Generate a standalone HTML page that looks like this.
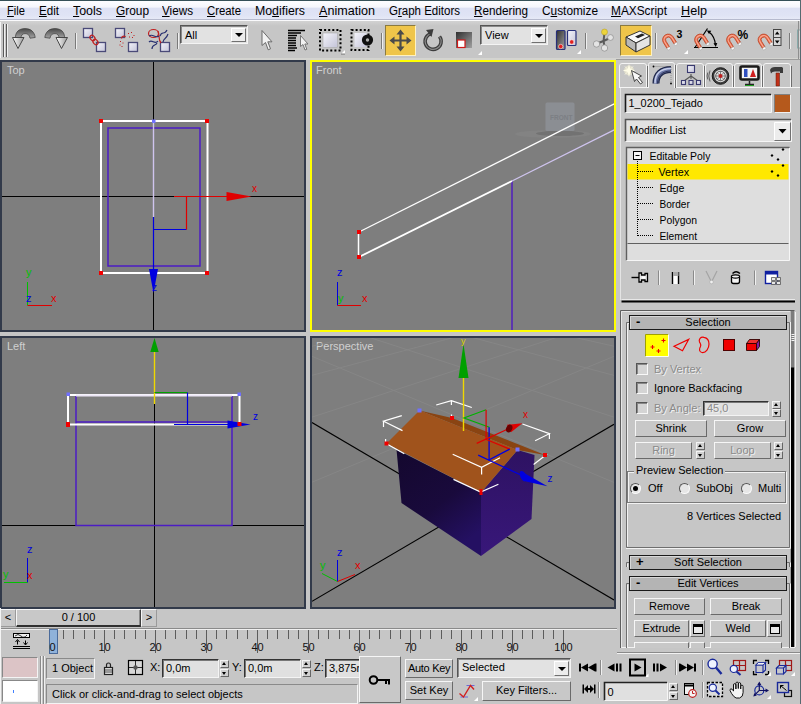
<!DOCTYPE html>
<html><head><meta charset="utf-8"><title>3ds Max</title>
<style>
*{box-sizing:border-box;margin:0;padding:0}
html,body{width:801px;height:704px;overflow:hidden;background:#c6c6c6}
body{font-family:"Liberation Sans",sans-serif;font-size:11px;color:#000;position:relative}
.abs{position:absolute}
#menubar{position:absolute;left:0;top:0;width:801px;height:20px;background:linear-gradient(#fdfdff 0,#f5f6fc 34%,#dde1f4 40%,#e0e4f5 80%,#e6e9f7 100%);border-top:1px solid #355058;border-bottom:1px solid #b6bace}
#menubar span{position:absolute;top:3px;font-size:12px;line-height:15px;white-space:nowrap;color:#000;transform-origin:0 0}
#menubar u{text-decoration:underline}
#tbhl{position:absolute;left:0;top:20px;width:801px;height:1px;background:#fafafc}
#toolbar{position:absolute;left:0;top:21px;width:801px;height:39px;background:linear-gradient(#d2d2d2 0,#c6c6c6 5px)}
.sep{position:absolute;width:2px;border-left:1px solid #7a7a7a;border-right:1px solid #efefef}
.combo{position:absolute;background:#e2e2e2;border:1px solid;border-color:#555 #f4f4f4 #f4f4f4 #555;box-shadow:inset 1px 1px 0 #8a8a8a}
.combo .t{position:absolute;left:4px;top:3px;font-size:11px;line-height:13px}
.combo .b{position:absolute;right:1px;top:2px;bottom:1px;width:15px;background:#ececec;border:1px solid;border-color:#fff #707070 #707070 #fff}
.combo .b:after{content:"";position:absolute;left:3px;top:50%;margin-top:-2px;border:4px solid transparent;border-top:4px solid #000;border-bottom:0}
.btn{position:absolute;background:#c8c8c8;border:1px solid;border-color:#f6f6f6 #6a6a6a #6a6a6a #f6f6f6;text-align:center;font-size:11px;line-height:14px;white-space:nowrap;overflow:hidden}
.btn.dis{color:#8a8a8a;text-shadow:1px 1px 0 #f0f0f0}
.field{position:absolute;background:#e0e0e0;border:1px solid;border-color:#333 #f4f4f4 #f4f4f4 #333;box-shadow:inset 1px 1px 0 #777;font-size:11px;line-height:14px;padding-left:3px;white-space:nowrap;overflow:hidden}
.spin{position:absolute;width:9px}
.spin i{position:absolute;left:0;width:9px;height:8px;background:#d0d0d0;border:1px solid;border-color:#f4f4f4 #666 #666 #f4f4f4}
.spin i:after{content:"";position:absolute;left:1px;top:1px;border:2.5px solid transparent}
.spin i.u{top:0}.spin i.u:after{border-bottom:3px solid #000;border-top:0}
.spin i.d{bottom:0}.spin i.d:after{border-top:3px solid #000;border-bottom:0;top:2px}
.lbl{position:absolute;font-size:11px;line-height:13px;white-space:nowrap}
.dis{color:#8a8a8a;text-shadow:1px 1px 0 #f0f0f0}
.chk{position:absolute;width:12px;height:12px;background:#d4d4d4;border:1px solid;border-color:#555 #f8f8f8 #f8f8f8 #555;box-shadow:inset 1px 1px 0 #888}
.roll{position:absolute;height:15px;background:#b4b4b4;border:1px solid #1a1a1a;box-shadow:inset 1px 1px 0 #d8d8d8;font-size:11px;line-height:13px;text-align:center}
.roll b{position:absolute;left:6px;top:-1px;font-weight:bold;font-size:13px}
.radio{position:absolute;width:11px;height:11px;border-radius:50%;background:#e6e6e6;border:1px solid;border-color:#555 #fafafa #fafafa #555}
.radio.on:after{content:"";position:absolute;left:2px;top:2px;width:5px;height:5px;border-radius:50%;background:#000}
</style></head><body>
<div id="menubar"><span style="left:7px;transform:scaleX(0.930)"><u>F</u>ile</span><span style="left:39px;transform:scaleX(0.966)"><u>E</u>dit</span><span style="left:73px;transform:scaleX(1.035)"><u>T</u>ools</span><span style="left:116px;transform:scaleX(0.989)"><u>G</u>roup</span><span style="left:162px;transform:scaleX(0.974)"><u>V</u>iews</span><span style="left:207px;transform:scaleX(0.944)"><u>C</u>reate</span><span style="left:255px;transform:scaleX(1.027)">Mo<u>d</u>ifiers</span><span style="left:319px;transform:scaleX(1.049)"><u>A</u>nimation</span><span style="left:389px;transform:scaleX(0.959)">G<u>r</u>aph Editors</span><span style="left:474px;transform:scaleX(0.975)"><u>R</u>endering</span><span style="left:542px;transform:scaleX(0.988)">C<u>u</u>stomize</span><span style="left:611px;transform:scaleX(0.988)"><u>M</u>AXScript</span><span style="left:681px;transform:scaleX(1.053)"><u>H</u>elp</span></div>
<!--MENUBAR_END-->
<!--TOOLBAR_START-->
<div id="tbhl"></div>
<div id="toolbar"></div>
<div class="abs" style="left:0;top:22px;width:1px;height:37px;background:#f4f4f4"></div>
<div class="abs" style="left:0;top:58px;width:801px;height:2px;background:#d4d4d0"></div>
<div class="abs" style="left:3px;top:24px;width:1px;height:33px;background:#5a5a5a"></div>
<div class="abs" style="left:4px;top:24px;width:1px;height:33px;background:#f0f0f0"></div>
<div class="abs" style="left:6px;top:24px;width:1px;height:33px;background:#5a5a5a"></div>
<div class="abs" style="left:7px;top:24px;width:1px;height:33px;background:#f0f0f0"></div>
<div class="sep" style="left:75px;top:33px;height:16px"></div>
<div class="sep" style="left:177px;top:33px;height:16px"></div>
<div class="sep" style="left:381px;top:33px;height:16px"></div>
<div class="sep" style="left:585px;top:33px;height:16px"></div>
<div class="sep" style="left:655px;top:33px;height:16px"></div>
<div class="sep" style="left:789px;top:33px;height:16px"></div>
<div class="abs" style="left:385px;top:25px;width:31px;height:31px;background:#efc54a;border:1px solid;border-color:#8a7a40 #fff2c0 #fff2c0 #8a7a40"></div>
<div class="abs" style="left:620px;top:25px;width:32px;height:31px;background:#efc54a;border:1px solid;border-color:#8a7a40 #fff2c0 #fff2c0 #8a7a40"></div>
<div class="combo" style="left:180px;top:25px;width:68px;height:19px"><span class="t">All</span><span class="b"></span></div>
<div class="combo" style="left:480px;top:25px;width:68px;height:20px"><span class="t">View</span><span class="b"></span></div>
<svg class="abs" style="left:0;top:22px" width="801" height="38" viewBox="0 22 801 38">
<defs>
<linearGradient id="gm" x1="0" y1="0" x2="1" y2="1"><stop offset="0" stop-color="#3a3a3a"/><stop offset="0.6" stop-color="#8a8a8a"/><stop offset="1" stop-color="#f2f2f2"/></linearGradient>
<linearGradient id="gm2" x1="0" y1="0" x2="0" y2="1"><stop offset="0" stop-color="#4a4a4a"/><stop offset="1" stop-color="#a8a8a8"/></linearGradient><linearGradient id="gh" x1="0" y1="0" x2="1" y2="0"><stop offset="0" stop-color="#ffffff"/><stop offset="1" stop-color="#9a9a9a"/></linearGradient><linearGradient id="gbox" x1="0" y1="0" x2="1" y2="1"><stop offset="0" stop-color="#f4f4fa"/><stop offset="1" stop-color="#c4c4d8"/></linearGradient>
<linearGradient id="gdark" x1="0" y1="0" x2="1" y2="1"><stop offset="0" stop-color="#303030"/><stop offset="1" stop-color="#a0a0a0"/></linearGradient>
<linearGradient id="gmag" x1="0" y1="0" x2="1" y2="1"><stop offset="0" stop-color="#f08060"/><stop offset="1" stop-color="#c83018"/></linearGradient>
</defs>
<!-- undo -->
<path d="M15.500 38.500 C15 32 19 28.600 25 28.600 C31 28.600 34.500 32 35.200 37.500 L30 38.200 C29.500 35 28 33.600 25 33.600 C22 33.600 21 35.500 21 38.500 Z" fill="url(#gm2)" stroke="#3a3a3a" stroke-width="0.700"/>
<path d="M12.500 37.500 L24 37.500 L18 48.500 Z" fill="url(#gh)" stroke="#3a3a3a" stroke-width="0.900"/>
<!-- redo -->
<path d="M64.500 38.500 C65 32 61 28.600 55 28.600 C49 28.600 45.500 32 44.800 37.500 L50 38.200 C50.500 35 52 33.600 55 33.600 C58 33.600 59 35.500 59 38.500 Z" fill="url(#gm2)" stroke="#3a3a3a" stroke-width="0.700"/>
<path d="M56 37.500 L67.500 37.500 L61.500 48.500 Z" fill="url(#gh)" stroke="#3a3a3a" stroke-width="0.900"/>
<!-- link -->
<g stroke="#4a4a78" stroke-width="1.3">
<rect x="83.5" y="28.5" width="9" height="9" fill="url(#gbox)"/><rect x="96.5" y="42.5" width="9" height="9" fill="url(#gbox)"/>
<rect x="115.5" y="28.5" width="9" height="9" fill="url(#gbox)"/><rect x="128.5" y="42.5" width="9" height="9" fill="url(#gbox)"/>
<rect x="160.5" y="42.5" width="9" height="9" fill="url(#gbox)"/>
</g>
<g fill="none" stroke="#c02020" stroke-width="1.2">
<ellipse cx="92.5" cy="38" rx="2.2" ry="3" transform="rotate(-40 92.5 38)"/><ellipse cx="95.5" cy="42" rx="2.2" ry="3" transform="rotate(-40 95.5 42)"/>
<path d="M121.5 38.5 a2.3 2.3 0 0 1 4 -1.5"/>
<path d="M128 33.5h1M131 32.5h1M133.500 35.500h1M129 37h1M132 37.500h1M120 41.500h1M122.500 43h1M119.500 45h1M121.500 46.500h1" stroke-width="1"/>
<ellipse cx="153.5" cy="33.500" rx="5" ry="4"/>
<path d="M158 31 C160 36 158 40 161 43"/>
</g>
<g fill="none" stroke="#283070" stroke-width="1.2">
<path d="M149 36 C153 33 155 39 159 36"/><path d="M149 42 C152 39 155 45 158 41"/><path d="M152 49 C152 44 156 46 157 43"/>
<path d="M160 36 C162 30 164 36 167 30"/><path d="M163 42 C164 37 166 40 168 34"/>
</g>
<!-- select cursor -->
<path d="M262 30.500 L262 45.500 L265.500 42.500 L268.200 49.800 L270.500 48.800 L267.800 41.800 L272 41.800 Z" fill="#f2f2f2" stroke="#6a6a6a" stroke-width="1"/>
<!-- select by name -->
<path d="M288 30.500h17M288 33h13M288 35.500h9M288 38h8M288 40.500h8M288 43h8M288 45.500h8M288 48h9M288 50.500h7" stroke="#000" stroke-width="1.3"/>
<path d="M300.500 35.500 L300.500 46.500 L303 44.500 L305 50 L306.800 49.300 L304.800 44 L308 44 Z" fill="#f2f2f2" stroke="#6a6a6a" stroke-width="0.9"/>
<!-- rect region -->
<rect x="320" y="30" width="20.500" height="20.500" fill="none" stroke="#000" stroke-width="2" stroke-dasharray="2 2.100"/>
<rect x="323" y="33" width="14.500" height="14.500" fill="url(#gbox)" stroke="#aaa" stroke-width="0.6"/>
<path d="M345 50 L345 54 L341 54 Z" fill="#fff"/><path d="M345 54 l-4 0" stroke="#333" stroke-width="0.6"/>
<!-- window crossing -->
<rect x="351.500" y="30" width="17" height="20" fill="none" stroke="#000" stroke-width="2" stroke-dasharray="2 2.100"/>
<rect x="354.500" y="33" width="12" height="14" fill="url(#gbox)"/>
<circle cx="367.500" cy="40" r="5.600" fill="#111"/><circle cx="367.500" cy="40" r="1.700" fill="#b0b0b0"/>
<!-- move -->
<g fill="#4a4a4a" stroke="#4a4a4a"><path d="M400.500 33v15M393 40.500h15" stroke-width="2.200"/>
<path d="M400.500 29.500l4 5h-8zM400.500 51.500l4-5h-8zM389.500 40.500l5-4v8zM411.500 40.500l-5-4v8z" stroke="none"/></g>
<!-- rotate -->
<path d="M431.500 33.500 A8 8 0 1 0 439.500 36.500" fill="none" stroke="#3c3c3c" stroke-width="3.600"/>
<path d="M431.500 33.500 A8 8 0 1 0 439.500 36.500" fill="none" stroke="#8a8a8a" stroke-width="1.200"/>
<path d="M426 30 L433.500 29 L431.500 37 Z" fill="#3c3c3c"/>
<!-- scale -->
<rect x="456" y="32" width="16" height="16" fill="url(#gdark)"/><rect x="457.500" y="40" width="7.500" height="7.500" fill="#fff" stroke="#d01818" stroke-width="1.200"/>
<!-- view flyout tri -->
<path d="M478 51 L478 55 L474 55 Z" fill="#fff" transform="translate(4 0)"/>
<!-- pivot -->
<rect x="556.500" y="30.500" width="8.500" height="19" rx="1" fill="url(#gdark)" stroke="#28307a" stroke-width="1.200"/><circle cx="560.700" cy="46.500" r="2.200" fill="#e02020" stroke="#fff" stroke-width="0.500"/>
<rect x="567.500" y="30.500" width="8.500" height="15" rx="1" fill="url(#gbox)" stroke="#28307a" stroke-width="1.200"/><circle cx="571.700" cy="42" r="2.200" fill="#e02020" stroke="#fff" stroke-width="0.500"/>
<path d="M581 50 L581 54 L577 54 Z" fill="#fff"/>
<!-- manipulate -->
<g stroke="#5a5a5a" stroke-width="2"><path d="M603.500 41 L604.500 33M603.500 41 L597 43.500M603.500 41 L610 38M603.500 41 L604.500 46.500"/></g>
<circle cx="604.500" cy="32" r="3" fill="#ecd43c" stroke="#b09820" stroke-width="0.500"/><circle cx="596.500" cy="44" r="3.200" fill="#e4e4e4" stroke="#8a8a8a" stroke-width="0.700"/><circle cx="610.500" cy="37.500" r="2.900" fill="#e4e4e4" stroke="#8a8a8a" stroke-width="0.700"/><circle cx="604.500" cy="48" r="3.200" fill="#e4e4e4" stroke="#8a8a8a" stroke-width="0.700"/>
<!-- keyboard override -->
<path d="M626 37 L640 31 L650 36 L636 43 Z" fill="#f8f8f8" stroke="#333" stroke-width="1"/>
<path d="M626 37 L636 43 L636 52 L626 45 Z" fill="#b8b8b8" stroke="#333" stroke-width="1"/>
<path d="M636 43 L650 36 L650 45 L636 52 Z" fill="#e4e4e4" stroke="#333" stroke-width="1"/>
<path d="M635 36.500 L642 33.500 L645 35 L638 38.200 Z" fill="#222"/>
<!-- magnets -->
<path d="M694 47.500 h24 M695 47.500 L707.500 28.500" stroke="#000" stroke-width="1.200" fill="none"/>
<path d="M708.500 31.500 C712.500 34.500 715 39.500 715.500 45" stroke="#000" stroke-width="1.200" fill="none"/><path d="M706.800 30.500 l4.500 0.300 l-2.300 3.200zM715.800 47 l-2.300 -3.800 l3.800 -0.200z" fill="#000"/>
<g id="mag" transform="translate(668.300 39.800) rotate(-32)"><path d="M-5.7 0A5.7 5.7 0 0 1 5.7 0V6.5H2.7V0A2.7 2.7 0 0 0 -2.7 0V6.5H-5.7Z" fill="#ee6c4c" stroke="#b84020" stroke-width="0.700"/><path d="M-4.200 6.5V0A4.200 4.200 0 0 1 4.200 0V6.5" fill="none" stroke="#f8b09a" stroke-width="1"/><path d="M-5.7 6.5h3v2.200h-3zM2.7 6.5h3v2.200h-3z" fill="#fafafa" stroke="#999" stroke-width="0.400"/></g>
<use href="#mag" x="32"/><use href="#mag" x="64"/><use href="#mag" x="95.500"/>
<text x="676.500" y="38" font-family="Liberation Sans,sans-serif" font-size="10.500" font-weight="bold" fill="#000">3</text>
<path d="M683 51 L683 55 L679 55 Z" fill="#fff" transform="translate(5 -1)"/>
<text x="737.500" y="38.500" font-family="Liberation Sans,sans-serif" font-size="12" font-weight="bold" fill="#000">%</text>
<rect x="773.500" y="29.500" width="7.500" height="16" fill="#d8d8d8" stroke="#444" stroke-width="1"/><path d="M773.500 37.500h7.500" stroke="#444"/><path d="M777.200 31.500l2.300 3h-4.600zM777.200 43.500l2.300 -3h-4.600z" fill="#000"/>
<rect x="797.500" y="30" width="4" height="18" fill="#d8d8d8" stroke="#8aa" stroke-width="1"/>
</svg>
<!--TOOLBAR_END-->
<!--VIEWPORTS_START-->
<svg class="abs" style="left:0;top:60px" width="618" height="549" viewBox="0 60 618 549" font-family="Liberation Sans,sans-serif" font-size="11">
<defs>
<linearGradient id="gwl" x1="0" y1="0" x2="0.600" y2="1"><stop offset="0" stop-color="#14082e"/><stop offset="0.600" stop-color="#190a3c"/><stop offset="1" stop-color="#241062"/></linearGradient><linearGradient id="gwf" x1="0" y1="0" x2="0" y2="1"><stop offset="0" stop-color="#2e1262"/><stop offset="1" stop-color="#38177a"/></linearGradient>
<clipPath id="cpT"><rect x="2" y="62" width="302" height="268"/></clipPath>
<clipPath id="cpF"><rect x="312" y="62" width="302" height="268"/></clipPath>
<clipPath id="cpL"><rect x="2" y="338" width="302" height="269"/></clipPath>
<clipPath id="cpP"><rect x="312" y="338" width="302" height="269"/></clipPath>
</defs>
<!-- frames -->
<rect x="1" y="61" width="304" height="270" fill="#7e7e7e" stroke="#323a4a" stroke-width="2"/>
<rect x="311" y="61" width="304" height="270" fill="#7e7e7e" stroke="#ffff00" stroke-width="2"/>
<rect x="1" y="337" width="304" height="271" fill="#7e7e7e" stroke="#323a4a" stroke-width="2"/>
<rect x="311" y="337" width="304" height="271" fill="#7e7e7e" stroke="#323a4a" stroke-width="2"/>
<g fill="#d0d0d0"><text x="7" y="74">Top</text><text x="316" y="74">Front</text><text x="7" y="350">Left</text><text x="316" y="350">Perspective</text></g>

<!-- TOP -->
<g clip-path="url(#cpT)">
<path d="M153.500 62V330M2 196.500H304" stroke="#000" stroke-width="1"/>
<rect x="108" y="128" width="92" height="138" fill="none" stroke="#4c1cc4" stroke-width="1.500"/>
<rect x="101" y="121" width="106.500" height="152" fill="none" stroke="#fff" stroke-width="2"/>
<path d="M153.500 121V217" stroke="#cfc4ee" stroke-width="1.400"/>
<path d="M153.500 217V270" stroke="#0000e0" stroke-width="1.200"/>
<path d="M149 269h9l-4.500 24z" fill="#0000e0"/>
<path d="M153.500 229.500H186.500" stroke="#0000e0" stroke-width="1.200"/>
<path d="M186.500 196.500V229.500M174 196.500H228" stroke="#e00000" stroke-width="1.200"/>
<path d="M226.500 192v9l25-4.500z" fill="#e00000"/>
<text x="252" y="192" fill="#e00000" font-size="10">x</text>
<text x="152" y="291" fill="#0000e0" font-size="10">z</text>
<g fill="#f00000"><rect x="99" y="119" width="4" height="4"/><rect x="205" y="119" width="4" height="4"/><rect x="99" y="271" width="4" height="4"/><rect x="205" y="271" width="4" height="4"/></g>
<rect x="152" y="119.500" width="3.500" height="3.500" fill="#7070ff"/>
<path d="M27.500 305.500V282" stroke="#00c000"/><path d="M27.500 305.500H52" stroke="#e00000"/>
<text x="26" y="276" fill="#00c000">y</text><text x="26" y="302" fill="#0000e0">z</text><text x="51" y="302" fill="#e00000">x</text>
</g>

<!-- FRONT -->
<g clip-path="url(#cpF)">
<ellipse cx="553" cy="134" rx="38" ry="3.800" fill="#838383"/><ellipse cx="560" cy="133.500" rx="24" ry="2.600" fill="#727272"/><rect x="545.500" y="102.500" width="29" height="28.500" rx="1.500" fill="#8b8e93"/><text x="550" y="119.500" font-size="6.500" fill="#7c7f84" font-weight="bold">FRONT</text>
<path d="M512 181V330" stroke="#4a10c8" stroke-width="1.300"/>
<path d="M359 232L615 103.500" stroke="#fff" stroke-width="1.300"/>
<path d="M359 257L512 181" stroke="#fff" stroke-width="1.800"/>
<path d="M512 181L615 129.500" stroke="#cfc4ee" stroke-width="1.300"/>
<path d="M358.500 232V257" stroke="#fff" stroke-width="1.500"/>
<g fill="#f00000"><rect x="357" y="230" width="4" height="4"/><rect x="357" y="255" width="4" height="4"/></g>
<path d="M337.500 305.500V282" stroke="#0000e0"/><path d="M337.500 305.500H361" stroke="#e00000"/>
<text x="337" y="276" fill="#0000e0">z</text><text x="338" y="302" fill="#00c000">y</text><text x="362" y="302" fill="#e00000">x</text>
</g>

<!-- LEFT -->
<g clip-path="url(#cpL)">
<path d="M154.500 404V607M2 525.500H304" stroke="#000" stroke-width="1"/>
<path d="M76 395V525.500H232V395M76 422H232" fill="none" stroke="#4c1cc4" stroke-width="1.500"/>
<rect x="68" y="395" width="171.500" height="29.500" fill="none" stroke="#fff" stroke-width="2"/>
<path d="M76 395.500H232" stroke="#ece6f6" stroke-width="2"/>
<path d="M154.500 352V404" stroke="#f0d800" stroke-width="1.400"/>
<path d="M154.500 338l4.200 14h-8.400z" fill="#00a000"/>
<path d="M154.500 392.500H187.500" stroke="#00a000" stroke-width="1.200"/>
<path d="M187.500 392.500V424.500M174 424.500H230" stroke="#0000e0" stroke-width="1.200"/>
<path d="M227.500 420.500v8l23-4z" fill="#0000e0"/>
<text x="253" y="420" fill="#0000e0" font-size="10">z</text>
<rect x="66" y="422" width="4" height="5" fill="#f00000"/><rect x="237.500" y="422" width="4" height="4" fill="#f00000"/>
<rect x="66.500" y="392.500" width="3.500" height="3.500" fill="#7070ff"/><rect x="237.500" y="392.500" width="3.500" height="3.500" fill="#7070ff"/>
<path d="M27.500 582.500V558" stroke="#0000e0"/><path d="M27.500 582.500H4" stroke="#00c000"/>
<text x="27" y="553" fill="#0000e0">z</text><text x="3" y="578" fill="#00c000">y</text><text x="27" y="579" fill="#e00000">x</text>
</g>

<!-- PERSPECTIVE -->
<g clip-path="url(#cpP)">
<path d="M305.0 485.1L620.0 353.8M305.0 419.4L620.0 316.7M305.0 377.2L620.0 292.9M305.0 347.8L620.0 276.3M305.0 326.2L620.0 264.2M305.0 309.6L620.0 254.8M305.0 296.5L620.0 247.4M305.0 285.9L620.0 241.4M305.0 277.1L620.0 236.5M305.0 269.7L620.0 232.3M305.0 263.4L620.0 228.7M305.0 257.9L620.0 225.7M305.0 253.2L620.0 223.0M305.0 249.0L620.0 220.6M305.0 353.4L620.0 484.9M305.0 316.4L620.0 419.1M305.0 292.7L620.0 377.0M305.0 276.1L620.0 347.6M305.0 264.0L620.0 326.0M305.0 254.7L620.0 309.5M305.0 247.3L620.0 296.4M305.0 241.3L620.0 285.7M305.0 236.3L620.0 277.0M305.0 232.2L620.0 269.6M305.0 228.6L620.0 263.3M305.0 225.6L620.0 257.8M305.0 222.9L620.0 253.1M305.0 220.6L620.0 248.9" stroke="#868686" stroke-width="1" fill="none"/>
<path d="M312 422.500L614 600" stroke="#000" stroke-width="1.100"/>
<path d="M614 424.300L312 601.300" stroke="#000" stroke-width="1.100"/>
<!-- house -->
<path d="M396.500 449.500L481 492.500L481 556L401.500 503Z" fill="url(#gwl)"/>
<path d="M481 492.500L517.500 450L534.500 455L531.500 519L481 556Z" fill="url(#gwf)"/>
<path d="M419.500 410.500L452 418L545 455L517.500 450Z" fill="#8a4412"/>
<path d="M386.500 443.500L419.500 410.500L517.500 450L481 492.500Z" fill="#a0531c"/>
<!-- brackets -->
<g stroke="#fff" stroke-width="1.200" fill="none">
<path d="M401.800 415.600L383.500 421.200L402.500 430.600M383.500 421.200V427"/>
<path d="M436.200 405L451.400 400.600L471.800 407.500M451.400 400.600V405"/>
<path d="M522.400 424L549.400 433.700L535.100 440.700M549.400 433.700V439"/>
<path d="M452.700 454.200L481.600 467.400L500 457.700M481.600 467.400V474.500"/>
<path d="M453.500 479.400L480.700 492.100L498.400 484.200"/>
<path d="M385.600 439V443.700M386.500 443.700L404.300 453.700"/>
<path d="M533.600 464.400L547.100 454"/>
<path d="M451.500 414.500V418"/>
</g>
<!-- gizmo -->
<path d="M463.500 378V431" stroke="#f0d800" stroke-width="1.400"/>
<path d="M463.500 344l5 34h-10z" fill="#00a000"/>
<text x="461" y="344" fill="#d8d000" font-size="9">y</text>
<path d="M486.100 409.700L464 418L489.400 427.300" fill="none" stroke="#00b000" stroke-width="1.200"/>
<path d="M486.100 409.700V439.700" stroke="#e00000" stroke-width="1.200"/>
<path d="M489.100 427.300V460" stroke="#0000e0" stroke-width="1.300"/>
<path d="M476.700 443.400L507.400 429.200M485.700 439.200L509.700 449.100" fill="none" stroke="#e00000" stroke-width="1.200"/>
<path d="M509.700 449.100L488.700 460L478.200 455.100" fill="none" stroke="#0000e0" stroke-width="1.300"/>
<path d="M488.700 460L522 475.500" stroke="#0000e0" stroke-width="1.300"/>
<path d="M520.500 471L526 481.500L547.500 486.300Z" fill="#0000e0"/><ellipse cx="523.300" cy="476.200" rx="3" ry="5.600" transform="rotate(-25 523.300 476.200)" fill="#0000e0"/>
<text x="547.500" y="481.500" fill="#0000e0" font-size="10">z</text>
<path d="M507 424.800L511 432.300L522.400 423.200Z" fill="#e00000"/><ellipse cx="509.200" cy="428.500" rx="3" ry="4" transform="rotate(25 509.200 428.500)" fill="#6a0000"/>
<text x="523" y="418" fill="#e00000" font-size="10">x</text>
<g fill="#f00000"><rect x="384.500" y="441.500" width="4" height="4"/><rect x="450" y="416" width="4" height="4"/><rect x="543" y="453" width="4" height="4"/><rect x="479.500" y="489" width="3" height="6"/></g>
<g fill="#7070ff"><rect x="417.500" y="408.500" width="4" height="4"/><rect x="515.500" y="447.500" width="4" height="4"/></g>
<path d="M337.500 581.500V560" stroke="#0000e0"/><path d="M337.500 581.500L322 573.500" stroke="#00c000"/><path d="M337.500 581.500L355 574.500" stroke="#e00000"/>
<text x="337" y="556" fill="#0000e0">z</text><text x="320" y="569" fill="#00c000">y</text><text x="355" y="569" fill="#e00000">x</text>
</g>
</svg>
<!--VIEWPORTS_END-->
<!--PANEL_START-->
<svg class="abs" style="left:616px;top:58px" width="185" height="597" viewBox="616 58 185 597" font-family="Liberation Sans,sans-serif" font-size="11">
<defs>
<linearGradient id="pbox" x1="0" y1="0" x2="1" y2="1"><stop offset="0" stop-color="#f4f4fa"/><stop offset="1" stop-color="#c4c4d8"/></linearGradient>
<linearGradient id="parc" x1="0" y1="0" x2="1" y2="1"><stop offset="0" stop-color="#20284a"/><stop offset="0.5" stop-color="#9aa4cc"/><stop offset="1" stop-color="#20284a"/></linearGradient>
</defs>
<path d="M616 59.500H801" stroke="#9c9c9c"/><path d="M620.500 88V300" stroke="#e4e4e4"/>
<!-- tabs -->
<g fill="#c6c6c6">
<path d="M619.500 87.500V66Q619.500 63.500 622 63.500H644Q646.500 63.500 646.500 66V87.500" stroke="#f4f4f4"/>
<path d="M676.500 87.500V66Q676.500 63.500 679 63.500H701Q703.500 63.500 703.500 66V87.500" stroke="#f4f4f4"/>
<path d="M705.500 87.500V66Q705.500 63.500 708 63.500H730Q732.500 63.500 732.500 66V87.500" stroke="#f4f4f4"/>
<path d="M734.500 87.500V66Q734.500 63.500 737 63.500H759Q761.500 63.500 761.500 66V87.500" stroke="#f4f4f4"/>
<path d="M763.500 87.500V66Q763.500 63.500 766 63.500H788Q790.500 63.500 790.500 66V87.500" stroke="#f4f4f4"/>
</g>
<path d="M647.500 66V87M704.500 66V87M733.500 66V87M762.500 66V87M791.500 66V87" stroke="#6e6e6e"/>
<path d="M619 87.500H648M675 87.500H801" stroke="#f4f4f4"/>
<path d="M648.500 88V64.500Q648.500 62.500 651 62.500H672Q674.500 62.500 674.500 64.500V88" fill="#c6c6c6" stroke="#f4f4f4"/>
<path d="M675.500 65V88" stroke="#6e6e6e"/>
<!-- tab icons -->
<circle cx="629" cy="70.500" r="5" fill="#fffad0" opacity="0.450"/><path d="M629 64l1.300 5l5 1.500l-5 1.500l-1.300 5l-1.300-5l-5-1.500l5-1.500z" fill="#fffde8"/><path d="M625 66.500l8 8M633 66.500l-8 8" stroke="#fffde8" stroke-width="0.800"/>
<path d="M631.500 70.500L634.500 81.500L636.500 79L640.500 84L642.500 82.500L638.500 77.500L641.500 76Z" fill="#f8f8f8" stroke="#333" stroke-width="0.900"/>
<path d="M656 83.500C656 74.500 661.500 69.500 671 69.500" fill="none" stroke="#1e2648" stroke-width="7"/><path d="M656 83.500C656 74.500 661.500 69.500 671 69.500" fill="none" stroke="#6c78a8" stroke-width="4.500"/><path d="M655 83.500C655 73.500 661 68.500 671 68.500" fill="none" stroke="#c4cce8" stroke-width="1.500"/><path d="M657.500 83.500C657.500 75.500 662.500 71 671 71" fill="none" stroke="#2a3258" stroke-width="1"/>
<path d="M653.500 66.500H671V83.500" fill="none" stroke="#555" stroke-width="0.500" stroke-dasharray="1 1"/><circle cx="653.500" cy="66.500" r="0.900" fill="#000"/><circle cx="671" cy="83.500" r="0.900" fill="#000"/>
<g stroke="#3a3a70" stroke-width="1.100" fill="url(#pbox)"><path d="M691 74V79M691 76L684 81M691 76L698 81" fill="none" stroke="#555"/><rect x="687.500" y="65.500" width="7" height="7"/><rect x="681.500" y="80.500" width="4" height="4"/><rect x="689" y="80.500" width="4" height="4"/><rect x="696.500" y="80.500" width="4" height="4"/></g>
<circle cx="720.500" cy="76" r="8.300" fill="#3a3a3a" stroke="#1a1a1a"/><circle cx="720.500" cy="76" r="6.200" fill="#e4e4e4"/><circle cx="720.500" cy="76" r="4.800" fill="none" stroke="#555" stroke-width="0.900"/><path d="M720.500 71v10M715.500 76h10M717 72.500l7 7M724 72.500l-7 7" stroke="#666" stroke-width="0.800"/><circle cx="720.500" cy="76" r="2" fill="#c02020"/><path d="M710 70.500q-2.500 5.500 0 11M707.800 72.500q-1.500 3.500 0 7" stroke="#555" fill="none" stroke-width="0.900"/>
<rect x="740.500" y="66.500" width="18" height="13" rx="1.500" fill="#f4f4f4" stroke="#1a1a1a" stroke-width="2.600"/><rect x="744" y="69" width="3.500" height="8" fill="#3050c0"/><path d="M750 77l3-8l3 8z" fill="#d02020"/><path d="M745 84.500h9M749.500 81v3" stroke="#222" stroke-width="1.500"/><path d="M745 85.500h9" stroke="#20a020" stroke-width="1"/>
<path d="M776 73h3.500v13h-3.500z" fill="#c03018" stroke="#601808" stroke-width="0.500"/><path d="M770 70q1-3 5-3h7l1 1v5h-3v-1.500h-5q-3 0-4 2z" fill="#3a3a3a"/>
<!-- name + color -->
<rect x="625" y="94.500" width="146" height="18" fill="#e0e0e0"/><path d="M771 94.500H625.500V112.500" fill="none" stroke="#1a1a1a" stroke-width="1.600"/><path d="M625.500 112.500H771.500V95" fill="none" stroke="#f6f6f6"/>
<text x="628.500" y="107" textLength="74.4" lengthAdjust="spacingAndGlyphs">1_0200_Tejado</text>
<rect x="774.500" y="94.500" width="16" height="18" fill="#b5591c"/><path d="M790.500 94.500H774.500V112.500" fill="none" stroke="#808080"/><path d="M774.500 112.500H790.500V94.500" fill="none" stroke="#f0f0f0"/>
<!-- modifier list -->
<rect x="625" y="119.500" width="166" height="22" fill="#e2e2e2"/><path d="M791 119.500H625.500V141.500" fill="none" stroke="#555" stroke-width="1.600"/><path d="M625.500 141.500H791.500V120" fill="none" stroke="#f6f6f6"/>
<text x="629.500" y="134" textLength="56.3" lengthAdjust="spacingAndGlyphs">Modifier List</text>
<rect x="774.500" y="122.500" width="15.500" height="17.500" fill="#ececec"/><path d="M774.500 140V122.500H790" fill="none" stroke="#fff"/><path d="M774.500 140.500H790.500V122.500" fill="none" stroke="#707070"/><path d="M778.500 129h8l-4 4.500z" fill="#000"/>
<!-- stack -->
<rect x="626" y="147.500" width="163.500" height="113" fill="#dedede"/><path d="M789.500 147.500H626.500V260.500" fill="none" stroke="#606060" stroke-width="1.400"/><path d="M626.500 260.500H789.500V148" fill="none" stroke="#f6f6f6"/>
<rect x="627.500" y="164" width="161" height="15.500" fill="#ffe800"/>
<path d="M627.500 243.500H788.500" stroke="#606060"/>
<rect x="633.500" y="151.500" width="8" height="8" fill="#f4f4f4" stroke="#000"/><path d="M635.500 155.500h4" stroke="#000"/>
<path d="M637.500 161V236M638 171.500h15M638 187.500h15M638 203.500h15M638 219.500h15M638 235.500h15" stroke="#000" stroke-dasharray="1 1" fill="none"/>
<text x="649.500" y="160" textLength="60.9" lengthAdjust="spacingAndGlyphs">Editable Poly</text><text x="658.500" y="176" textLength="30.6" lengthAdjust="spacingAndGlyphs">Vertex</text><text x="659.500" y="192" textLength="24.8" lengthAdjust="spacingAndGlyphs">Edge</text><text x="659.500" y="208" textLength="30.3" lengthAdjust="spacingAndGlyphs">Border</text><text x="659.500" y="224" textLength="37.5" lengthAdjust="spacingAndGlyphs">Polygon</text><text x="659.500" y="240" textLength="37.5" lengthAdjust="spacingAndGlyphs">Element</text>
<g fill="#000"><path d="M770.500 155.500l1.500-1.500l1.500 1.500l-1.500 1.500zM776.500 159.500l1.500-1.500l1.500 1.500l-1.500 1.500zM781.500 149.500l1.500-1.500l1.500 1.500l-1.500 1.500zM770.500 171.500l1.500-1.500l1.500 1.500l-1.500 1.500zM776.500 175.500l1.500-1.500l1.500 1.500l-1.500 1.500zM781.500 165.500l1.500-1.500l1.500 1.500l-1.500 1.500z"/></g>
<!-- stack buttons -->
<path d="M631.500 277.500h8" stroke="#000" stroke-width="1.400"/><path d="M639 273h2.500v2h3.500v-1.500h2.500v8h-2.500v-1.500h-3.500v2h-2.500z" fill="#e8e8e8" stroke="#000" stroke-width="1.300"/><path d="M642 276.500h3v2h-3z" fill="#fff"/>
<path d="M658.500 270.500V285M693.500 270.500V285M754.500 270.500V285" stroke="#8a8a8a"/><path d="M659.500 270.500V285M694.500 270.500V285M755.500 270.500V285" stroke="#f0f0f0"/>
<rect x="672.500" y="272" width="6" height="12" fill="#fff"/><path d="M672.500 272V284M678.500 272V284" stroke="#000" stroke-width="1.400"/><path d="M673 272h5.500v4h-5.500z" fill="#aaa"/>
<path d="M706 271l5.500 11l5.500-11" fill="none" stroke="#a4a4a4" stroke-width="1.200"/><circle cx="711.500" cy="282" r="1.800" fill="#f0f0f0" stroke="#aaa" stroke-width="0.600"/>
<path d="M731.500 276.500h8v5q0 2-2 2h-4q-2 0-2-2z" fill="#f4f4f4" stroke="#000" stroke-width="1.300"/><ellipse cx="735.500" cy="276.500" rx="4" ry="1.600" fill="#f4f4f4" stroke="#000" stroke-width="1.100"/><path d="M732.500 273.500q3.500-3.500 7.500 0" fill="none" stroke="#000" stroke-width="1.400"/>
<rect x="765.500" y="271.500" width="12" height="12" fill="#fff" stroke="#1020a0" stroke-width="1.400"/><rect x="765.500" y="271.500" width="12" height="3" fill="#1020a0"/><path d="M771.500 277.500h4v3h-4zM776.500 277.500h4v3h-4zM771.500 281.500h4v3h-4zM776.500 281.500h4v3h-4z" fill="#e8e8e8" stroke="#444" stroke-width="0.700"/>
<!-- separator -->
<path d="M621.500 299.500H795" stroke="#e8e8e8" stroke-width="1"/><path d="M621.500 301.500H795" stroke="#000" stroke-width="2"/>
<!-- rollout container -->
<path d="M794.500 310.500H620.500V648" fill="none" stroke="#5e5e5e"/><path d="M790 311.500H621.500V648" fill="none" stroke="#e6e6e6"/>
<path d="M621.500 647.500H795" stroke="#f2f2f2"/><path d="M617 652.500H801" stroke="#8a8a8a"/><path d="M617 653.500H801" stroke="#f2f2f2"/>
<!-- scrollbar -->
<rect x="790.800" y="311" width="3.400" height="57" fill="#7c7c7c"/><rect x="790.800" y="367.500" width="3.400" height="279.500" fill="#000"/><path d="M795.500 312V647" stroke="#f2f2f2"/>
<path d="M791.500 334.500h3M791.500 336.500h3M791.500 338.500h3M791.500 340.500h3" stroke="#f4f4f4"/>
<!-- selection rollout frame -->
<path d="M629 322.500H626.500V547.500H789.500V322.500H787" fill="none" stroke="#6e6e6e"/><path d="M629 323.500H627.500V546.500M626 548.500H790.500V322" fill="none" stroke="#f2f2f2"/>
<path d="M629 562.500H626.500V567M789.500 567V562.500H787" fill="none" stroke="#6e6e6e"/><path d="M627.500 563.500V567M790.500 562.500V567" stroke="#f2f2f2"/>
<path d="M629 583.500H626.500V648M789.500 648V583.500H787" fill="none" stroke="#6e6e6e"/><path d="M627.500 584.500V648M790.500 583.500V648" stroke="#f2f2f2"/>
<!-- sub-object icons -->
<rect x="645.500" y="334.500" width="23" height="22" fill="#ffff00"/><path d="M668.500 334.500H645.500V356.500" fill="none" stroke="#a0a000"/><path d="M645.500 356.500H668.500V334.500" fill="none" stroke="#fffff0"/>
<path d="M661.500 340.500h4M663.500 338.500v4M650.500 347h4M652.500 345v4M656.500 351h4M658.500 349v4" stroke="#f00000" stroke-width="1.100"/>
<path d="M674 346.200L688.700 339.400L682.500 350.800Z" fill="none" stroke="#f00000" stroke-width="1.200"/>
<path d="M704 337.300C700.500 336.500 698.500 339.500 699.500 342C700.500 344 701.500 344.500 700.500 346.500C699 349 699 352 702 352.500C706 353 709 348.500 709 344C709 340.500 707.500 338 704 337.300Z" fill="none" stroke="#f00000" stroke-width="1.200"/>
<rect x="723.500" y="339.500" width="11" height="11" fill="#f00000" stroke="#500000" stroke-width="1"/>
<path d="M746.500 343.500L749.500 339.500H759.500L756.500 343.500Z" fill="#f03030" stroke="#300000" stroke-width="0.900"/><path d="M746.500 343.500H756.500V350.500H746.500Z" fill="#f00000" stroke="#300000" stroke-width="0.900"/><path d="M756.500 343.500L759.500 339.500V346.500L756.500 350.500Z" fill="#8020a0" stroke="#300000" stroke-width="0.900"/>
</svg>
<!-- selection widgets -->
<div class="roll" style="left:629px;top:315px;width:158px"><b>-</b>Selection</div>
<div class="chk" style="left:636px;top:363px"></div><div class="lbl dis" style="left:654px;top:363px">By Vertex</div>
<div class="chk" style="left:636px;top:382px"></div><div class="lbl" style="left:654px;top:382px">Ignore Backfacing</div>
<div class="chk" style="left:636px;top:402px"></div><div class="lbl dis" style="left:654px;top:402px">By Angle:</div>
<div class="field dis" style="left:703px;top:401px;width:66px;height:15px;line-height:12px">45,0</div>
<div class="spin" style="left:772px;top:401px;height:16px"><i class="u"></i><i class="d"></i></div>
<div class="btn" style="left:635px;top:420px;width:72px;height:17px">Shrink</div>
<div class="btn" style="left:714px;top:420px;width:72px;height:17px">Grow</div>
<div class="btn dis" style="left:635px;top:442px;width:57px;height:17px">Ring</div>
<div class="spin" style="left:696px;top:442px;height:17px"><i class="u"></i><i class="d"></i></div>
<div class="btn dis" style="left:714px;top:442px;width:57px;height:17px">Loop</div>
<div class="spin" style="left:774px;top:442px;height:17px"><i class="u"></i><i class="d"></i></div>
<div class="abs" style="left:627px;top:471px;width:159px;height:32px;border:1px solid #7a7a7a;box-shadow:1px 1px 0 #f2f2f2, inset 1px 1px 0 #f2f2f2"></div>
<div class="lbl" style="left:634px;top:464px;background:#c6c6c6;padding:0 2px">Preview Selection</div>
<div class="radio on" style="left:630px;top:483px"></div><div class="lbl" style="left:648px;top:482px">Off</div>
<div class="radio" style="left:679px;top:483px"></div><div class="lbl" style="left:696px;top:482px">SubObj</div>
<div class="radio" style="left:741px;top:483px"></div><div class="lbl" style="left:758px;top:482px">Multi</div>
<div class="lbl" style="left:687px;top:510px">8 Vertices Selected</div>
<div class="roll" style="left:629px;top:555px;width:158px"><b>+</b>Soft Selection</div>
<div class="roll" style="left:629px;top:576px;width:158px"><b>-</b>Edit Vertices</div>
<div class="btn" style="left:634px;top:598px;width:71px;height:17px">Remove</div>
<div class="btn" style="left:710px;top:598px;width:72px;height:17px">Break</div>
<div class="btn" style="left:634px;top:620px;width:55px;height:17px">Extrude</div>
<div class="btn" style="left:690px;top:620px;width:15px;height:17px"><i class="abs" style="left:2px;top:3px;width:10px;height:10px;border:1px solid #000;border-top:3px solid #000;background:#e8e8e8"></i></div>
<div class="btn" style="left:710px;top:620px;width:56px;height:17px">Weld</div>
<div class="btn" style="left:767px;top:620px;width:15px;height:17px"><i class="abs" style="left:2px;top:3px;width:10px;height:10px;border:1px solid #000;border-top:3px solid #000;background:#e8e8e8"></i></div>
<div class="btn" style="left:634px;top:642px;width:55px;height:6px;border-bottom:0"></div>
<div class="btn" style="left:690px;top:642px;width:15px;height:6px;border-bottom:0"></div>
<div class="btn" style="left:710px;top:642px;width:72px;height:6px;border-bottom:0"></div>
<!--PANEL_END-->
<!--BOTTOM_START-->
<div class="abs" style="left:0;top:609px;width:617px;height:18px;background:#c6c6c6"></div>
<div class="btn" style="left:0;top:609px;width:16px;height:18px;border-color:#f6f6f6 #9a9a9a #9a9a9a #f6f6f6;font-size:11px;line-height:15px">&lt;</div>
<div class="btn" style="left:141px;top:609px;width:16px;height:18px;border-color:#f6f6f6 #9a9a9a #9a9a9a #f6f6f6;font-size:11px;line-height:15px">&gt;</div>
<div class="btn" style="left:16px;top:609px;width:125px;height:18px;border-color:#f6f6f6 #404040 #303030 #f6f6f6;border-bottom-width:2px;box-shadow:inset -1px 0 0 #8a8a8a;font-size:11px;line-height:15px">0 / 100</div>
<div class="abs" style="left:0;top:628px;width:617px;height:1px;background:#8a8a8a"></div>
<div class="abs" style="left:0;top:629px;width:617px;height:1px;background:#efefef"></div>
<svg class="abs" style="left:0;top:628px" width="617" height="28" viewBox="0 628 617 28" font-family="Liberation Sans,sans-serif" font-size="11"><path d="M53.5 630V653M63.5 630V639M73.5 630V639M84.5 630V639M94.5 630V639M104.5 630V653M114.5 630V639M124.5 630V639M135.5 630V639M145.5 630V639M155.5 630V653M165.5 630V639M175.5 630V639M186.5 630V639M196.5 630V639M206.5 630V653M216.5 630V639M226.5 630V639M237.5 630V639M247.5 630V639M257.5 630V653M267.5 630V639M277.5 630V639M288.5 630V639M298.5 630V639M308.5 630V653M318.5 630V639M328.5 630V639M339.5 630V639M349.5 630V639M359.5 630V653M369.5 630V639M379.5 630V639M390.5 630V639M400.5 630V639M410.5 630V653M420.5 630V639M430.5 630V639M441.5 630V639M451.5 630V639M461.5 630V653M471.5 630V639M481.5 630V639M492.5 630V639M502.5 630V639M512.5 630V653M522.5 630V639M532.5 630V639M543.5 630V639M553.5 630V639M563.5 630V653" stroke="#5c5c5c" stroke-width="1"/><rect x="49.500" y="629.500" width="8" height="24" fill="#8fb2da" stroke="#4a6a9a"/><text x="52.5" y="651" text-anchor="middle" fill="#111">0</text><text x="104.5" y="651" text-anchor="middle" fill="#111">10</text><text x="155.5" y="651" text-anchor="middle" fill="#111">20</text><text x="206.5" y="651" text-anchor="middle" fill="#111">30</text><text x="257.5" y="651" text-anchor="middle" fill="#111">40</text><text x="308.5" y="651" text-anchor="middle" fill="#111">50</text><text x="359.5" y="651" text-anchor="middle" fill="#111">60</text><text x="410.5" y="651" text-anchor="middle" fill="#111">70</text><text x="461.5" y="651" text-anchor="middle" fill="#111">80</text><text x="512.5" y="651" text-anchor="middle" fill="#111">90</text><text x="563.5" y="651" text-anchor="middle" fill="#111">100</text><g stroke="#000" fill="none"><rect x="13.500" y="633.500" width="16" height="4" fill="#f0f0f0"/><path d="M15 636q3-3 6 0t6 -1" stroke-width="0.800"/><path d="M13 646.500h17M13 648.500h17" stroke-width="1.200"/><path d="M17.500 644.500v-4M15.500 642l2-2.500l2 2.500M25.500 640.500v4M23.500 642.500l2 2.500l2-2.500" stroke-width="1"/></g></svg>
<div class="abs" style="left:2px;top:657px;width:36px;height:21px;background:#dcc4c6;border:1px solid;border-color:#888 #f4f4f4 #f4f4f4 #888"></div>
<div class="abs" style="left:2px;top:680px;width:36px;height:22px;background:#fff;border:1px solid;border-color:#888 #f4f4f4 #f4f4f4 #888"><i class="abs" style="left:10px;top:9px;width:1px;height:3px;background:#4080ff"></i></div>
<div class="abs" style="left:40px;top:656px;width:1px;height:48px;background:#8a8a8a"></div><div class="abs" style="left:41px;top:656px;width:1px;height:48px;background:#f0f0f0"></div>
<div class="abs" style="left:43px;top:656px;width:1px;height:48px;background:#8a8a8a"></div><div class="abs" style="left:44px;top:656px;width:1px;height:48px;background:#f0f0f0"></div>
<div class="abs" style="left:46px;top:658px;width:49px;height:21px;border:1px solid;border-color:#8a8a8a #f4f4f4 #f4f4f4 #8a8a8a;font-size:11px;line-height:19px;padding-left:5px;white-space:nowrap">1 Object</div>
<div class="abs" style="left:46px;top:684px;width:312px;height:20px;border:1px solid;border-color:#8a8a8a #f4f4f4 #f4f4f4 #8a8a8a;font-size:11px;line-height:19px;padding-left:5px;white-space:nowrap">Click or click-and-drag to select objects</div>
<svg class="abs" style="left:100px;top:656px" width="60" height="24" viewBox="100 656 60 24"><rect x="104.500" y="667.500" width="8" height="7" fill="#e8e8e8" stroke="#222" stroke-width="1.200"/><path d="M105 670h7M105 672h7" stroke="#222" stroke-width="0.800"/><path d="M106.500 667.500v-2.500a2 2 0 0 1 4 0v2.500" fill="none" stroke="#222" stroke-width="1.200"/><rect x="128.500" y="660.500" width="14" height="14" fill="#d8d8d8" stroke="#000" stroke-width="1.200"/><path d="M135.500 660.500v14M128.500 667.500h14" stroke="#000" stroke-width="0.800"/><circle cx="135.500" cy="667.500" r="2.200" fill="#555"/></svg>
<div class="lbl" style="left:150px;top:661px;font-size:11px">X:</div><div class="field" style="left:162px;top:659px;width:57px;height:19px;line-height:16px;font-size:11px">0,0m</div><div class="spin" style="left:220px;top:660px;height:17px"><i class="u"></i><i class="d"></i></div>
<div class="lbl" style="left:232px;top:661px;font-size:11px">Y:</div><div class="field" style="left:244px;top:659px;width:57px;height:19px;line-height:16px;font-size:11px">0,0m</div><div class="spin" style="left:302px;top:660px;height:17px"><i class="u"></i><i class="d"></i></div>
<div class="lbl" style="left:314px;top:661px;font-size:11px">Z:</div><div class="field" style="left:325px;top:659px;width:36px;height:19px;line-height:16px;font-size:11px;border-right:0">3,875m</div>
<div class="btn" style="left:359px;top:656px;width:42px;height:47px"><svg width="40" height="45" viewBox="0 0 40 45"><circle cx="13.500" cy="23" r="3.800" fill="none" stroke="#000" stroke-width="2"/><path d="M17 23h13M26 23v4M29 23v4.500" stroke="#000" stroke-width="2"/></svg></div>
<div class="btn" style="left:405px;top:659px;width:48px;height:19px;font-size:11px;line-height:16px;text-align:left;padding-left:2px;letter-spacing:-0.300px">Auto Key</div>
<div class="btn" style="left:405px;top:681px;width:48px;height:19px;font-size:11px;line-height:16px">Set Key</div>
<div class="combo" style="left:457px;top:658px;width:114px;height:20px"><span class="t" style="font-size:11px;top:2px">Selected</span><span class="b"></span></div>
<div class="btn" style="left:482px;top:681px;width:89px;height:20px;font-size:11px;line-height:17px">Key Filters...</div>
<svg class="abs" style="left:456px;top:680px" width="24" height="24" viewBox="456 680 24 24"><path d="M460.500 697h7.500M466.500 685.500h8" stroke="#6868d8" stroke-width="1.200"/><path d="M459.500 693.500L463.500 697L470.500 685.500L474 689.500" fill="none" stroke="#d02020" stroke-width="1.400"/><path d="M478 697v4h-4z" fill="#fff"/></svg>
<svg class="abs" style="left:572px;top:655px" width="229" height="49" viewBox="572 655 229 49" font-family="Liberation Sans,sans-serif" font-size="11">
<g fill="#000"><path d="M579 663.500h2v8h-2zM595 663.500h1.500v8h-1.500z"/><path d="M581 667.500l7-4v8zM588 667.500l7-4v8z"/>
<path d="M614.500 663.500l-7 4l7 4zM616 663.500h2v8h-2zM619.500 663.500h2v8h-2z"/>
<path d="M653 663.500h2v8h-2zM656.500 663.500h2v8h-2zM660 663.500l7 4l-7 4z"/>
<path d="M680 663.500l7 4l-7 4zM687 663.500l7 4l-7 4zM694 663.500h2v8h-2zM679 663.500h1.500v8h-1.500z"/>
<path d="M634.500 663.500l7 4l-7 4z"/><path d="M648.500 673.500v3.500h-3.500z" fill="#fff"/>
</g>
<rect x="630" y="659.500" width="15" height="16" fill="none" stroke="#000" stroke-width="2"/>
<path d="M600.500 660V675M675.500 660V675M702.500 660V675" stroke="#8a8a8a"/><path d="M601.500 660V675M676.500 660V675M703.500 660V675" stroke="#f0f0f0"/>
<path d="M598.500 682V698M702.500 682V698" stroke="#8a8a8a"/><path d="M599.500 682V698M703.500 682V698" stroke="#f0f0f0"/>
<g fill="#000"><path d="M582.500 684.500h1.500v9h-1.500zM594 684.500h1.500v9h-1.500zM584 689l4-4v8zM594 689l-4-4v8z"/><path d="M586 688h6v2h-6z"/></g>
<rect x="604" y="682.500" width="63" height="18" fill="#e0e0e0"/><path d="M667 682.500H604.500V700.500" fill="none" stroke="#222" stroke-width="1.600"/><path d="M604.500 700.500H667.500V683" fill="none" stroke="#f6f6f6"/><text x="607.500" y="696">0</text>
<!-- key mode -->
<rect x="684.500" y="683.500" width="9" height="11" fill="#f0f0f0" stroke="#000"/><path d="M684.500 685.500h9" stroke="#000" stroke-width="2"/><circle cx="692.500" cy="693.500" r="3.800" fill="#f4f4f4" stroke="#c02020" stroke-width="1.200"/><path d="M692.500 691v2.500h2" stroke="#c02020" fill="none"/>
<!-- nav icons row1 -->
<circle cx="712.600" cy="663.900" r="4.600" fill="#eef2ff" stroke="#1a2a9a" stroke-width="1.400"/><path d="M716 667.500l5.500 6.500" stroke="#1a2a9a" stroke-width="2.400"/>
<g stroke="#a01818" fill="none" stroke-width="1.200"><rect x="733.500" y="660.500" width="12" height="10"/><path d="M739.500 660.500v10M733.500 665.500h12"/></g><circle cx="733.800" cy="668.900" r="3.600" fill="#eef2ff" stroke="#1a2a9a" stroke-width="1.200"/><path d="M736.500 671.500l4 3.500" stroke="#1a2a9a" stroke-width="2"/>
<path d="M756 665l2.500-2.500h7l-2.500 2.500zM756 665h7v7.500h-7zM763 665l2.500-2.500v7.500l-2.500 2.500z" fill="#c8c8cc" stroke="#1a2a9a" stroke-width="1.100"/><path d="M758.500 662.500h7l-2.500 2.500h-7z" fill="#f4f4f4" stroke="#1a2a9a" stroke-width="0.800"/><path d="M753.500 664v-3.500h3.500M768.500 664v-3.500h-3.500M753.500 671v3.500h3.500M768.500 671v3.500h-3.500" stroke="#000" fill="none" stroke-width="1.300"/><path d="M771 672v4h-4z" fill="#fff"/>
<g stroke="#a01818" fill="none" stroke-width="1.200"><rect x="779.500" y="660.500" width="12" height="10"/><path d="M785.500 660.500v10M779.500 665.500h12"/></g><path d="M776.500 668l2.500-2.500h7l-2.500 2.500zM776.500 668h7v6h-7zM783.500 668l2.500-2.500v6l-2.500 2.500z" fill="#c8c8cc" stroke="#1a2a9a" stroke-width="1.100"/><path d="M795 672v4h-4z" fill="#fff"/>
<!-- row2 -->
<rect x="707.500" y="682.500" width="15" height="14" fill="#dcdcdc" stroke="#000" stroke-width="1.300" stroke-dasharray="2.500 1.500"/><circle cx="712.800" cy="687.800" r="3.600" fill="#eef2ff" stroke="#1a2a9a" stroke-width="1.200"/><path d="M715.500 690.500l4 4" stroke="#1a2a9a" stroke-width="2"/>
<path d="M733.500 691v-6q0-1.400 1.200-1.400t1.200 1.400v4v-5.500q0-1.400 1.200-1.400t1.200 1.400v5v-4.500q0-1.400 1.200-1.400t1.200 1.400v5v-2.500q0-1.300 1.200-1.300t1.200 1.300v6q0 4.500-3.500 5.500h-3.500q-2.500-1-4.500-4.500l-1.500-2.800q-0.500-1.500 0.800-1.800t2.200 1.800z" fill="#f4f4f4" stroke="#111" stroke-width="1"/>
<circle cx="759.300" cy="690.400" r="4.500" fill="none" stroke="#1a2a9a" stroke-width="1.200"/><path d="M759.300 683.500v7h8M759.300 690.400l-5 5" stroke="#101060" fill="none" stroke-width="1.200"/><path d="M759.300 681.500l2 3.500h-4zM769 690.400l-3.500 2v-4zM753.300 696.500l1-3.500l2.500 2.500z" fill="#101060"/><path d="M771 695v4h-4z" fill="#fff"/>
<rect x="784.500" y="690.500" width="7" height="6" fill="#c6c6c6" stroke="#111" stroke-width="1.200"/><rect x="777.500" y="682.500" width="11" height="10" fill="#c6c6c6" stroke="#1a2a9a" stroke-width="1.400"/><path d="M780.500 685.500l6 5M780.500 685.500v3M780.500 685.500h3" stroke="#000" fill="none" stroke-width="1"/>
</svg>
<div class="spin" style="left:669px;top:683px;height:17px"><i class="u"></i><i class="d"></i></div>
<div class="abs" style="left:800px;top:0;width:1px;height:704px;background:#566a70"></div>
<div class="abs" style="left:798px;top:21px;width:1px;height:38px;background:#8e8e8e"></div>
<div class="abs" style="left:0;top:608px;width:1px;height:96px;background:#f4f4f4"></div>
<!--BOTTOM_END-->
</body></html>
